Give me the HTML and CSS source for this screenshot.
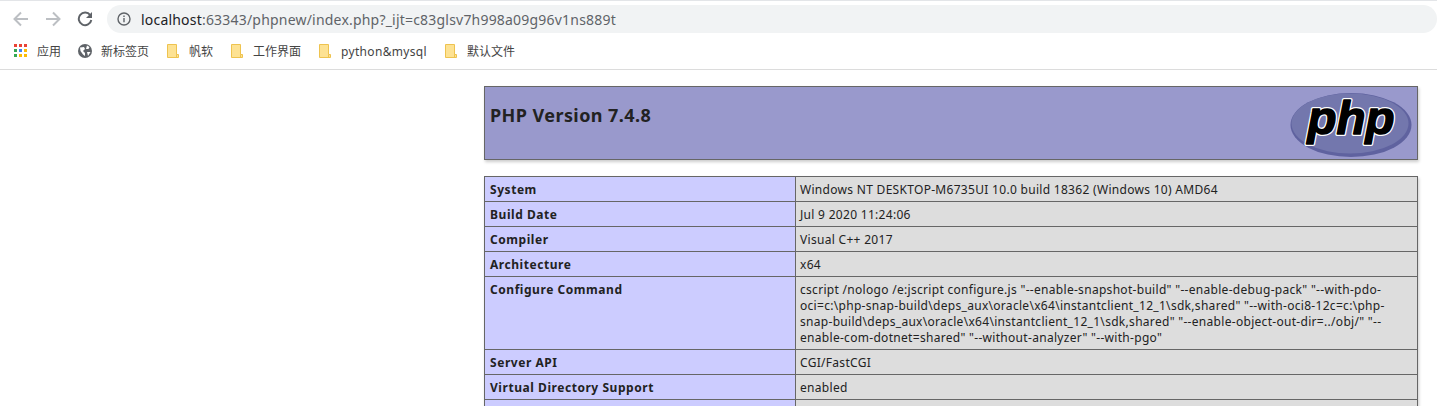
FILE: index.html
```html
<!DOCTYPE html>
<html lang="zh">
<head>
<meta charset="utf-8">
<title>phpinfo()</title>
<link rel="stylesheet" href="styles.css">
</head>
<body>
<header class="browser">
  <div class="toolbar">
    <svg class="nav" viewBox="0 0 16 16" width="16" height="16"><path d="M15 8H2M8 1.5 1.5 8 8 14.5" fill="none" stroke="#bcbfc3" stroke-width="2"/></svg>
    <svg class="nav" viewBox="0 0 16 16" width="16" height="16"><path d="M1 8h13M8 1.5 14.5 8 8 14.5" fill="none" stroke="#bcbfc3" stroke-width="2"/></svg>
    <svg class="nav" viewBox="0 0 16 16" width="16" height="16"><path d="M13.2 4.2A6.3 6.3 0 1 0 14.3 9" fill="none" stroke="#5f6368" stroke-width="2"/><path d="M15 1v6H9z" fill="#5f6368"/></svg>
    <div class="address">
      <svg viewBox="0 0 14 14" width="14" height="14"><circle cx="7" cy="7" r="6" fill="none" stroke="#5f6368" stroke-width="1.4"/><path d="M6.3 6h1.4v4.2H6.3zM6.3 3.6h1.4V5H6.3z" fill="#5f6368"/></svg>
      <span class="url"><span class="host">localhost</span>:63343/phpnew/index.php?_ijt=c83glsv7h998a09g96v1ns889t</span>
    </div>
  </div>
  <nav class="bookmarks">
    <div class="mark apps">
      <svg viewBox="0 0 14 14" width="14" height="14"><g><rect width="3" height="3" x="0" y="0" fill="#ea4335"/><rect width="3" height="3" x="5" y="0" fill="#ea4335"/><rect width="3" height="3" x="10" y="0" fill="#ea4335"/><rect width="3" height="3" x="0" y="5" fill="#34a853"/><rect width="3" height="3" x="5" y="5" fill="#4285f4"/><rect width="3" height="3" x="10" y="5" fill="#fbbc05"/><rect width="3" height="3" x="0" y="10" fill="#34a853"/><rect width="3" height="3" x="5" y="10" fill="#fbbc05"/><rect width="3" height="3" x="10" y="10" fill="#fbbc05"/></g></svg>
      <span>应用</span>
    </div>
    <div class="mark globe">
      <svg viewBox="0 0 14 14" width="14" height="14"><circle cx="7" cy="7" r="7" fill="#5f6368"/><path d="M2 3.5 6 3l1 2-2 2 2 2v3L5 10.500 2.500 7zM9 1.500l2.500 1.500-1 2H8zM9 8h3.500L10 12z" fill="#fff"/></svg>
      <span>新标签页</span>
    </div>
    <div class="mark folder"><svg viewBox="0 0 12 14" width="12" height="14"><path d="M.5.5h9v10h2v3H.5zM9.500 10.500v3" fill="#fde293" stroke="#eec34f"/></svg><span>帆软</span></div>
    <div class="mark folder"><svg viewBox="0 0 12 14" width="12" height="14"><path d="M.5.5h9v10h2v3H.5zM9.500 10.500v3" fill="#fde293" stroke="#eec34f"/></svg><span>工作界面</span></div>
    <div class="mark folder"><svg viewBox="0 0 12 14" width="12" height="14"><path d="M.5.5h9v10h2v3H.5zM9.500 10.500v3" fill="#fde293" stroke="#eec34f"/></svg><span class="latin">python&amp;mysql</span></div>
    <div class="mark folder"><svg viewBox="0 0 12 14" width="12" height="14"><path d="M.5.5h9v10h2v3H.5zM9.500 10.500v3" fill="#fde293" stroke="#eec34f"/></svg><span>默认文件</span></div>
  </nav>
</header>
<main class="page">
  <div class="banner">
    <h1>PHP Version 7.4.8</h1>
    <svg class="logo" viewBox="0 0 122 66" width="122" height="66">
      <ellipse cx="61" cy="33" rx="60.500" ry="32" fill="#5f629f"/>
      <ellipse cx="60" cy="31.500" rx="58.500" ry="30" fill="#7377ad"/>
      <text x="61" y="42" text-anchor="middle" textLength="87" lengthAdjust="spacingAndGlyphs" class="logo-halo">php</text>
      <text x="61" y="42" text-anchor="middle" textLength="87" lengthAdjust="spacingAndGlyphs" class="logo-text">php</text>
    </svg>
  </div>
  <table class="info">
    <tr><th>System</th><td>Windows NT DESKTOP-M6735UI 10.0 build 18362 (Windows 10) AMD64</td></tr>
    <tr><th>Build Date</th><td>Jul 9 2020 11:24:06</td></tr>
    <tr><th>Compiler</th><td>Visual C++ 2017</td></tr>
    <tr><th>Architecture</th><td>x64</td></tr>
    <tr><th>Configure Command</th><td>cscript /nologo /e:jscript configure.js "--enable-snapshot-build" "--enable-debug-pack" "--with-pdo-oci=c:\php-snap-build\deps_aux\oracle\x64\instantclient_12_1\sdk,shared" "--with-oci8-12c=c:\php-snap-build\deps_aux\oracle\x64\instantclient_12_1\sdk,shared" "--enable-object-out-dir=../obj/" "--enable-com-dotnet=shared" "--without-analyzer" "--with-pgo"</td></tr>
    <tr><th>Server API</th><td>CGI/FastCGI</td></tr>
    <tr><th>Virtual Directory Support</th><td>enabled</td></tr>
    <tr class="cut"><th></th><td></td></tr>
  </table>
</main>
</body>
</html>
```
FILE: styles.css
```css
* { box-sizing: border-box; }
html, body { margin: 0; height: 406px; overflow: hidden; background: #fff; }
body { font-family: "Noto Sans", "Noto Sans CJK SC", sans-serif; color: #222; }
.browser { height: 70px; border-top: 1px solid #e3e5e8; border-bottom: 1px solid #dcdcdc; }
.toolbar { display: flex; align-items: center; height: 32px; padding: 4px 0 0 13px; gap: 16px; }
.nav { flex: none; }
.address { display: flex; align-items: center; gap: 10px; width: 1330px; height: 28px; margin-left: -2px; padding-left: 10px; border-radius: 14px; background: #f1f3f4; }
.url { font-size: 14px; color: #5f6368; letter-spacing: .2px; }
.host { color: #202124; }
.bookmarks { display: flex; align-items: center; height: 36px; padding-left: 14px; font-size: 12px; color: #444; }
.mark { display: flex; align-items: center; gap: 10px; }
.apps { gap: 9px; margin-right: 17px; }
.globe { gap: 9px; margin-right: 18px; }
.folder { margin-right: 18px; }
.latin { letter-spacing: .32px; }
.page { width: 934px; margin-left: 484px; padding-top: 16px; }
.banner { display: flex; justify-content: space-between; align-items: flex-start; height: 74px; margin-bottom: 16px; padding: 4px 5px 0; background: #99c; border: 1px solid #666; box-shadow: 1px 2px 3px #ccc; }
h1 { margin: 11px 0 0; font-size: 18px; line-height: 26px; font-weight: 700; letter-spacing: .42px; }
.logo { margin-top: 1px; }
.logo-text, .logo-halo { font: italic 700 46px "Liberation Sans", sans-serif; }
.logo-halo { fill: #fff; stroke: #fff; stroke-width: 4px; stroke-linejoin: round; }
.logo-text { fill: #000; stroke: #000; stroke-width: 1.5px; stroke-linejoin: round; }
.info { width: 934px; table-layout: fixed; border-collapse: collapse; box-shadow: 1px 2px 3px #ccc; }
th, td { height: 25px; padding: 5px 5px 3px; border: 1px solid #666; font-size: 12px; line-height: 16px; text-align: left; vertical-align: baseline; overflow-wrap: anywhere; }
th { width: 311px; background: #ccf; font-weight: 700; letter-spacing: .55px; }
td { padding-left: 4px; background: #ddd; letter-spacing: .3px; }
```
